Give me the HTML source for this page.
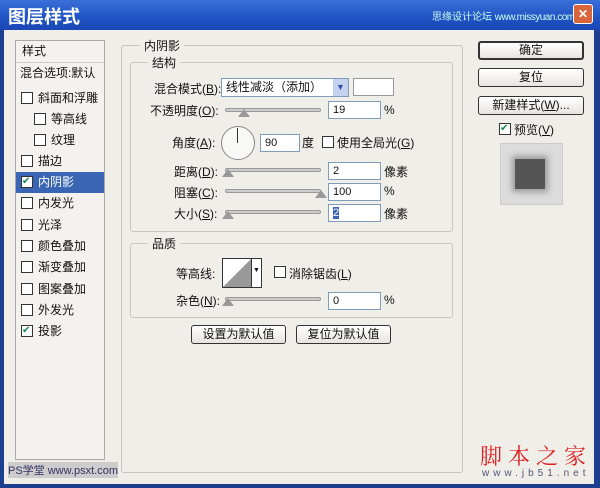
<!DOCTYPE html>
<html><head><meta charset="utf-8"><style>
*{margin:0;padding:0;box-sizing:border-box}
body{width:600px;height:488px;overflow:hidden;background:#1d3f8f;font-family:"Liberation Sans","Noto Sans CJK SC",sans-serif;font-size:12px;color:#111;position:relative}
.a{position:absolute}
.title{left:0;top:0;width:600px;height:30px;background:linear-gradient(#3a6fd8,#1f52c4 60%,#1a48b5);}
.body{left:4px;top:30px;width:590px;height:454px;background:#efeee9}
.lab{position:absolute;white-space:nowrap}
.cb{position:absolute;width:12px;height:12px;border:1px solid #333;background:#fff}
.inp{position:absolute;background:#fff;border:1px solid #7f9db9;padding-left:4px;line-height:16px;font-size:11px}
.sl{position:absolute;height:4px;border:1px solid #999;background:#ccc;border-radius:2px}
.th{position:absolute;width:0;height:0;border-left:6px solid transparent;border-right:6px solid transparent;border-bottom:8px solid #999}
.btn{position:absolute;border:1px solid #333;border-radius:3px;background:linear-gradient(#fff,#e6e5de);text-align:center;line-height:17px}
.grp{position:absolute;border:1px solid #c8c7c0;border-radius:3px}
.row{position:absolute;left:0;width:88px;height:21px;line-height:21px}
</style></head><body>
<div class="a title"></div>
<div class="lab" style="left:8px;top:3px;color:#fff;font-size:18px;font-weight:bold">图层样式</div>
<div class="lab" style="left:432px;top:8px;color:#cfe;font-size:10px">思缘设计论坛 <span style="letter-spacing:-0.5px">www.missyuan.com</span></div>
<div class="a" style="left:573px;top:4px;width:20px;height:20px;background:#d9653c;border:1px solid #fff;border-radius:3px;color:#fff;text-align:center;line-height:18px;font-weight:bold">✕</div>
<div class="a body"></div>
<!-- left list -->
<div class="a" style="left:15px;top:40px;width:90px;height:420px;background:#f3f2ee;border:1px solid #aaa">
<div class="row" style="top:0;padding-left:6px">样式</div>
<div class="row" style="top:21px;padding-left:4px;border-top:1px solid #ccc">混合选项:默认</div>
<div class="row" style="top:47px;padding-left:22px">斜面和浮雕</div><div class="cb" style="left:5px;top:51px"></div>
<div class="row" style="top:68px;padding-left:35px">等高线</div><div class="cb" style="left:18px;top:72px"></div>
<div class="row" style="top:89px;padding-left:35px">纹理</div><div class="cb" style="left:18px;top:93px"></div>
<div class="row" style="top:110px;padding-left:22px">描边</div><div class="cb" style="left:5px;top:114px"></div>
<div class="row" style="top:131px;padding-left:22px;background:#3a64b4;color:#fff">内阴影</div><div class="cb" style="left:5px;top:135px;font-size:10px;line-height:10px;color:#185">✔</div>
<div class="row" style="top:152px;padding-left:22px">内发光</div><div class="cb" style="left:5px;top:156px"></div>
<div class="row" style="top:174px;padding-left:22px">光泽</div><div class="cb" style="left:5px;top:178px"></div>
<div class="row" style="top:195px;padding-left:22px">颜色叠加</div><div class="cb" style="left:5px;top:199px"></div>
<div class="row" style="top:216px;padding-left:22px">渐变叠加</div><div class="cb" style="left:5px;top:220px"></div>
<div class="row" style="top:238px;padding-left:22px">图案叠加</div><div class="cb" style="left:5px;top:242px"></div>
<div class="row" style="top:259px;padding-left:22px">外发光</div><div class="cb" style="left:5px;top:263px"></div>
<div class="row" style="top:280px;padding-left:22px">投影</div><div class="cb" style="left:5px;top:284px;font-size:10px;line-height:10px;color:#185">✔</div>
</div>
<div class="lab" style="left:8px;top:462px;background:#ccc;color:#336;font-size:11px">PS学堂 www.psxt.com</div>
<!-- right groups -->
<div class="grp" style="left:121px;top:45px;width:342px;height:428px"></div>
<div class="lab" style="left:140px;top:37px;background:#efeee9;padding:0 4px">内阴影</div>
<div class="grp" style="left:130px;top:62px;width:323px;height:170px"></div>
<div class="lab" style="left:148px;top:54px;background:#efeee9;padding:0 4px">结构</div>
<div class="lab" style="left:154px;top:80px">混合模式(<u>B</u>):</div>
<div class="a" style="left:221px;top:78px;width:128px;height:19px;background:#fff;border:1px solid #7f9db9;padding-left:4px;line-height:17px">线性减淡（添加）</div>
<div class="a" style="left:333px;top:79px;width:15px;height:17px;background:#c5d3f0;color:#35a;font-size:9px;text-align:center;line-height:17px">▼</div>
<div class="a" style="left:353px;top:78px;width:41px;height:18px;background:#fff;border:1px solid #999"></div>
<div class="lab" style="left:150px;top:102px">不透明度(<u>O</u>):</div>
<div class="sl" style="left:225px;top:108px;width:96px"></div><div class="th" style="left:238px;top:109px"></div>
<div class="inp" style="left:328px;top:101px;width:53px;height:18px">19</div><div class="lab" style="left:384px;top:103px">%</div>
<div class="lab" style="left:172px;top:134px">角度(<u>A</u>):</div>
<div class="a" style="left:221px;top:126px;width:34px;height:34px;border:1px solid #888;border-radius:50%;background:#f8f8f6"></div>
<div class="a" style="left:237px;top:128px;width:1px;height:15px;background:#333"></div>
<div class="inp" style="left:260px;top:134px;width:40px;height:18px">90</div>
<div class="lab" style="left:302px;top:134px">度</div>
<div class="cb" style="left:322px;top:136px"></div>
<div class="lab" style="left:337px;top:134px">使用全局光(<u>G</u>)</div>
<div class="lab" style="left:174px;top:163px">距离(<u>D</u>):</div>
<div class="sl" style="left:225px;top:168px;width:96px"></div><div class="th" style="left:222px;top:169px"></div>
<div class="inp" style="left:328px;top:162px;width:53px;height:18px">2</div><div class="lab" style="left:384px;top:163px">像素</div>
<div class="lab" style="left:174px;top:184px">阻塞(<u>C</u>):</div>
<div class="sl" style="left:225px;top:189px;width:96px"></div><div class="th" style="left:315px;top:190px"></div>
<div class="inp" style="left:328px;top:183px;width:53px;height:18px">100</div><div class="lab" style="left:384px;top:184px">%</div>
<div class="lab" style="left:174px;top:205px">大小(<u>S</u>):</div>
<div class="sl" style="left:225px;top:210px;width:96px"></div><div class="th" style="left:222px;top:211px"></div>
<div class="inp" style="left:328px;top:204px;width:53px;height:18px"><span style="background:#3a64b4;color:#fff">2</span></div><div class="lab" style="left:384px;top:205px">像素</div>
<div class="grp" style="left:130px;top:243px;width:323px;height:75px"></div>
<div class="lab" style="left:148px;top:235px;background:#efeee9;padding:0 4px">品质</div>
<div class="lab" style="left:176px;top:265px">等高线:</div>
<div class="a" style="left:222px;top:258px;width:40px;height:30px;border:1px solid #333;background:#fff"></div>
<svg class="a" style="left:223px;top:259px" width="28" height="28"><polygon points="0,28 28,0 28,28" fill="#999"/></svg>
<div class="a" style="left:251px;top:259px;width:10px;height:28px;border-left:1px solid #333;font-size:7px;text-align:center;line-height:24px">▼</div>
<div class="cb" style="left:274px;top:266px"></div>
<div class="lab" style="left:289px;top:265px">消除锯齿(<u>L</u>)</div>
<div class="lab" style="left:176px;top:292px">杂色(<u>N</u>):</div>
<div class="sl" style="left:225px;top:297px;width:96px"></div><div class="th" style="left:222px;top:298px"></div>
<div class="inp" style="left:328px;top:292px;width:53px;height:18px">0</div><div class="lab" style="left:384px;top:293px">%</div>
<div class="btn" style="left:191px;top:325px;width:95px;height:19px">设置为默认值</div>
<div class="btn" style="left:296px;top:325px;width:95px;height:19px">复位为默认值</div>
<!-- right buttons -->
<div class="btn" style="left:478px;top:41px;width:106px;height:19px;border-width:2px;line-height:15px">确定</div>
<div class="btn" style="left:478px;top:68px;width:106px;height:19px">复位</div>
<div class="btn" style="left:478px;top:96px;width:106px;height:19px">新建样式(<u>W</u>)...</div>
<div class="cb" style="left:499px;top:123px;font-size:10px;line-height:10px;color:#185">✔</div>
<div class="lab" style="left:514px;top:121px">预览(<u>V</u>)</div>
<div class="a" style="left:500px;top:143px;width:63px;height:62px;background:#dcdcdc;border:1px solid #ccc"></div>
<div class="a" style="left:515px;top:159px;width:30px;height:30px;background:#555;box-shadow:0 0 6px 3px #999"></div>
<div class="lab" style="left:480px;top:440px;color:#d22;font-size:22px;letter-spacing:6px;font-family:'Noto Serif CJK SC',serif">脚本之家</div>
<div class="lab" style="left:482px;top:468px;color:#557;font-size:10px;letter-spacing:4px">www.jb51.net</div>
</body></html>
